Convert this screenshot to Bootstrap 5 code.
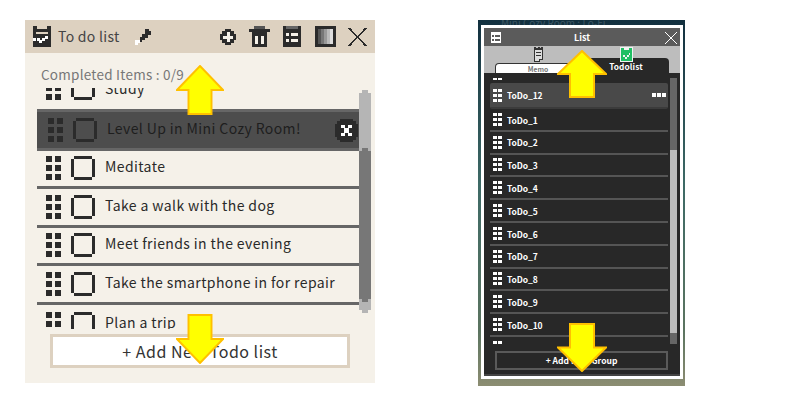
<!DOCTYPE html>
<html lang="en">
<head>
  <meta charset="UTF-8"/>
  <meta name="viewport" content="width=device-width, initial-scale=1.0"/>
  <title>To do list</title>
  <link href="https://cdn.jsdelivr.net/npm/bootstrap@5.3.2/dist/css/bootstrap.min.css" rel="stylesheet"/>
  <style>
    body { background: #fff; font-family: "Noto Sans CJK JP", "Noto Sans", sans-serif; overflow: hidden; }
    svg { display: block; flex: none; shape-rendering: crispEdges; }
    .shots { width: 800px; height: 403px; }

    /* left shot */
    .todo-panel { width: 350px; height: 363px; margin: 20px 0 0 25px; background: #f5f1e9; }
    .todo-head { height: 33px; background: #ddd1c0; padding: 0 8px; color: #444; font-size: 14px; letter-spacing: .3px; }
    .todo-head-title { margin-left: 7px; }
    .todo-count { height: 35px; padding: 11px 0 0 16px; color: #777; font-size: 13.5px; line-height: 20px; letter-spacing: .25px; }
    .todo-view { height: 241px; margin-left: 12px; overflow: hidden; }
    .todo-list { flex: none; width: 322px; margin-top: -18px; }
    .todo-list .todo-row { flex: none; height: 38.5px; padding: 0 0 0 9px; gap: 10px; background: none; border: 0; border-bottom: 3px solid #666; border-radius: 0; color: #2a2a2a; font-size: 14px; letter-spacing: .4px; white-space: nowrap; }
    .todo-list .todo-row > span { margin-top: -3px; }
    .todo-list .todo-row.above-drag { border-bottom-color: transparent; }
    .todo-list .todo-row.above-drag > span { margin-top: 1px; }
    .todo-list .todo-row.drag { height: 42px; padding-left: 11px; background: #4d4d4d; border-top: 3px solid #666; border-bottom: 3px solid #666; color: #1e1e1e; }
    .todo-bar { flex: none; width: 12px; height: 223px; margin-top: 2px; background: #b5b5b5; clip-path: polygon(3px 0, 9px 0, 9px 3px, 12px 3px, 12px 220px, 9px 220px, 9px 223px, 3px 223px, 3px 220px, 0 220px, 0 3px, 3px 3px); }
    .todo-thumb { height: 154px; margin-top: 58px; background: #777; clip-path: polygon(3px 0, 9px 0, 9px 3px, 12px 3px, 12px 151px, 9px 151px, 9px 154px, 3px 154px, 3px 151px, 0 151px, 0 3px, 3px 3px); }
    .todo-add.btn { display: block; width: 300px; height: 34px; margin: 5px 0 0 25px; padding: 0; background: #fff; border: 3px solid #ddd1c0; border-radius: 0; color: #333; font-size: 16px; line-height: 26px; letter-spacing: .5px; }
    .row-close { right: 1px; top: 7px; }

    /* right shot */
    .game-shot { width: 207px; height: 366px; margin: 20px 0 0 103px; padding: 5px 2px 7px 3px; background: linear-gradient(#12303f, #3e6a66 45%, #5b7460 85%, #8c8d72 100%); overflow: hidden; }
    .game-behind { height: 5px; margin-top: -5px; padding-left: 20px; color: #3c5664; font-size: 10px; line-height: 5px; overflow: hidden; }
    .game-frame { height: 354px; border: 3px solid #fff; background: #282828; box-shadow: inset 0 -2px #444; }
    .game-head { height: 18px; padding: 1px 3px 0 7px; background: #5b5b5b; color: #fff; font-size: 9px; font-weight: 700; }
    .game-head span { margin-right: 2px; }
    .game-tabs { height: 27px; padding: 1px 0 0 11px; background: #bdbdbd; gap: 2px; }
    .tab-col { width: 86px; }
    .tab-memo { height: 10px; margin-top: 1px; background: #fff; border: 1px solid #333; border-bottom: 0; border-radius: 4px 4px 0 0; color: #777; font-size: 6.8px; font-weight: 700; line-height: 10px; }
    .tab-todo { height: 15px; margin-top: -4px; padding-top: 1px; background: #282828; border-radius: 4px 4px 0 0; color: #fff; font-size: 8.3px; font-weight: 700; line-height: 15px; letter-spacing: .1px; }
    .tab-col svg { position: relative; z-index: 1; }
    .game-view { height: 266px; margin: 5px 0 0 6px; overflow: hidden; }
    .game-list { flex: none; width: 178px; margin-top: -15px; }
    .game-list .game-row { flex: none; height: 22.8px; padding: 0 0 0 3px; gap: 5px; background: none; border: 0; border-bottom: 2px solid #555; border-radius: 0; color: #fff; font-size: 8.5px; font-weight: 700; letter-spacing: -.1px; }
    .game-list .game-row > span { margin-top: 1px; }
    .game-list .game-row.stub { height: 20px; border: 0; padding-top: 4px; align-items: flex-start; }
    .game-list .game-row.pick { height: 26px; background: #494949; border-bottom: 2px solid #3b3b3b; border-radius: 2px; }
    .game-bar { flex: none; width: 7px; height: 266px; margin-left: 2px; background: #666; }
    .game-thumb { height: 183px; margin-top: 72px; background: #bcbcbc; }
    .game-add.btn { display: block; width: 173px; height: 19px; margin: 7px 0 0 11px; padding: 0; background: none; border: 2px solid #5a5a5a; border-radius: 0; color: #fff; font-size: 8.5px; font-weight: 700; line-height: 15px; }
    .more-dots { right: 2px; top: 10px; }

    /* arrows drawn over the shots */
    .shot-arrow { position: absolute; shape-rendering: geometricPrecision; }
    .arrow-a { left: 151px; top: 45px; width: 48px; height: 50px; }
    .arrow-b { left: 151px; top: 294px; width: 48px; height: 50px; }
    .arrow-c { left: 79px; top: 30px; width: 50px; height: 48px; }
    .arrow-d { left: 79px; top: 303px; width: 50px; height: 49px; }
  </style>
</head>
<body>
  <svg width="0" height="0" class="position-absolute">
    <symbol id="ic-grip" viewBox="0 0 15 24"><path fill="currentColor" d="M0 0h6v6H0zM9 0h6v6H9zM0 9h6v6H0zM9 9h6v6H9zM0 18h6v6H0zM9 18h6v6H9z"/></symbol>
    <symbol id="ic-box" viewBox="0 0 24 24"><path fill="currentColor" d="M3 0h18v3H3zM3 21h18v3H3zM0 3h3v18H0zM21 3h3v18h-3z"/></symbol>
    <symbol id="ic-arrow" viewBox="0 0 50 50" preserveAspectRatio="none"><polygon points="25,1 49,25 37,25 37,49 13,49 13,25 1,25" fill="#ffff00" stroke="#ffc000" stroke-width="2"/></symbol>
  </svg>

  <div class="shots d-flex align-items-start">
    <div class="todo-panel position-relative">
      <div class="todo-head d-flex align-items-center">
        <svg width="18" height="21" viewBox="0 0 18 21"><path fill="#2b2b2b" d="M0 0h18v21H0z"/><path fill="#ddd1c0" d="M4 0h10v3H4z"/><path fill="#ddd1c0" d="M3 6h12v2H3z"/><path fill="#fff" d="M0 12h3v3H0zM4 12h3v3H4zM6 14h3v3H6zM9 12h3v3H9zM12 10h3v3h-3z"/></svg>
        <span class="todo-head-title">To do list</span>
        <svg style="margin-left:14px" width="17" height="16" viewBox="0 0 17 16"><path fill="#2b2b2b" d="M11 0h4v2h2v4h-3v3h-3v2H8v2H6V8h2V5h3z"/><path fill="#fff" d="M1 11h5v3H4v2H1z"/></svg>
        <svg class="ms-auto" width="16" height="16" viewBox="0 0 16 16"><path fill="#2b2b2b" d="M5 0h6v2h3v3h2v6h-2v3h-3v2H5v-2H2v-3H0V5h2V2h3z"/><path fill="#f5f1e9" d="M7 3h3v4h3v3h-3v3H7v-3H3V7h4z"/></svg>
        <svg style="margin-left:13px" width="21" height="21" viewBox="0 0 21 21"><path fill="#555" d="M5 0h11v3H5z"/><path fill="#2b2b2b" d="M0 3h21v3H0zM3 6h15v15H3z"/><path fill="#f5f1e9" d="M6 10h3v8H6zM12 10h3v8h-3z"/></svg>
        <svg style="margin-left:13px" width="18" height="21" viewBox="0 0 18 21"><path fill="#2b2b2b" d="M0 0h18v21H0z"/><path fill="#666" d="M3 0h12v3H3z"/><path fill="#f5f1e9" d="M3 7h3v3H3zM8 7h7v3H8zM3 13h3v3H3zM8 13h7v3H8z"/></svg>
        <svg style="margin-left:14px" width="21" height="21" viewBox="0 0 21 21"><path fill="#2b2b2b" d="M0 0h21v21H0z"/><path fill="#555" d="M3 3h3v15H3z"/><path fill="#777" d="M6 3h3v15H6z"/><path fill="#999" d="M9 3h3v15H9z"/><path fill="#bbb" d="M12 3h3v15h-3z"/><path fill="#ddd" d="M15 3h3v15h-3z"/></svg>
        <svg style="margin-left:12px" width="19" height="20" viewBox="0 0 19 20"><path fill="none" stroke="#2b2b2b" stroke-width="1.6" d="M1 1l17 18M18 1L1 19"/></svg>
      </div>
      <div class="todo-count">Completed Items : 0/9</div>
      <div class="todo-view d-flex">
        <div class="todo-list list-group list-group-flush">
          <div class="todo-row above-drag list-group-item d-flex align-items-center">
            <svg width="15" height="24" color="#2b2b2b"><use href="#ic-grip"/></svg>
            <svg width="24" height="24" color="#2b2b2b"><use href="#ic-box"/></svg>
            <span>Study</span>
          </div>
          <div class="todo-row drag list-group-item d-flex align-items-center position-relative">
            <svg width="15" height="24" color="#2b2b2b"><use href="#ic-grip"/></svg>
            <svg width="24" height="24" color="#2b2b2b"><use href="#ic-box"/></svg>
            <span>Level Up in Mini Cozy Room!</span>
            <svg class="row-close position-absolute" width="23" height="23" viewBox="0 0 23 23"><path fill="#2b2b2b" d="M5 0h13v2h3v3h2v13h-2v3h-3v2H5v-2H2v-3H0V5h2V2h3z"/><path fill="#fff" d="M6 6h4v3H6zM13 6h4v3h-4zM9 9h5v5H9zM6 14h4v3H6zM13 14h4v3h-4z"/></svg>
          </div>
          <div class="todo-row list-group-item d-flex align-items-center">
            <svg width="15" height="24" color="#2b2b2b"><use href="#ic-grip"/></svg>
            <svg width="24" height="24" color="#2b2b2b"><use href="#ic-box"/></svg>
            <span>Meditate</span>
          </div>
          <div class="todo-row list-group-item d-flex align-items-center">
            <svg width="15" height="24" color="#2b2b2b"><use href="#ic-grip"/></svg>
            <svg width="24" height="24" color="#2b2b2b"><use href="#ic-box"/></svg>
            <span>Take a walk with the dog</span>
          </div>
          <div class="todo-row list-group-item d-flex align-items-center">
            <svg width="15" height="24" color="#2b2b2b"><use href="#ic-grip"/></svg>
            <svg width="24" height="24" color="#2b2b2b"><use href="#ic-box"/></svg>
            <span>Meet friends in the evening</span>
          </div>
          <div class="todo-row list-group-item d-flex align-items-center">
            <svg width="15" height="24" color="#2b2b2b"><use href="#ic-grip"/></svg>
            <svg width="24" height="24" color="#2b2b2b"><use href="#ic-box"/></svg>
            <span>Take the smartphone in for repair</span>
          </div>
          <div class="todo-row list-group-item d-flex align-items-center">
            <svg width="15" height="24" color="#2b2b2b"><use href="#ic-grip"/></svg>
            <svg width="24" height="24" color="#2b2b2b"><use href="#ic-box"/></svg>
            <span>Plan a trip</span>
          </div>
        </div>
        <div class="todo-bar"><div class="todo-thumb"></div></div>
      </div>
      <button type="button" class="todo-add btn">+ Add New Todo list</button>
      <svg class="shot-arrow arrow-a"><use href="#ic-arrow"/></svg>
      <svg class="shot-arrow arrow-b" style="transform:scaleY(-1)"><use href="#ic-arrow"/></svg>
    </div>

    <div class="game-shot position-relative">
      <div class="game-behind">Mini Cozy Room : Lo-Fi</div>
      <div class="game-frame">
        <div class="game-head d-flex align-items-center justify-content-between">
          <svg width="10" height="11" viewBox="0 0 10 11"><path fill="#fff" d="M0 0h10v11H0z"/><path fill="#5b5b5b" d="M1 3h2v2H1zM4 3h5v2H4zM1 7h2v2H1zM4 7h5v2H4z"/></svg>
          <span>List</span>
          <svg width="12" height="12" viewBox="0 0 12 12"><path fill="none" stroke="#fff" d="M0 0l12 12M12 0L0 12"/></svg>
        </div>
        <div class="game-tabs d-flex">
          <div class="tab-col d-flex flex-column align-items-center">
            <svg width="11" height="15" viewBox="0 0 11 15"><path fill="#333" d="M1 1h9v12H7v2H1z"/><path fill="#ddd" d="M2 3h7v9H6v2H2z"/><path fill="#333" d="M1 0h2v2H1zM5 0h2v2H5zM8 0h2v2H8zM3 5h5v1H3zM3 8h5v1H3z"/></svg>
            <div class="tab-memo w-100 text-center">Memo</div>
          </div>
          <div class="tab-col d-flex flex-column align-items-center">
            <svg width="13" height="15" viewBox="0 0 13 15"><path fill="#f2f2f2" d="M0 0h13v15H0z"/><path fill="#1fbf63" d="M1 1h11v13H1z"/><path fill="#f2f2f2" d="M4 1h5v2H4zM3 8h2v2H3zM5 10h2v2H5zM7 8h2v2H7zM9 6h1v2H9z"/></svg>
            <div class="tab-todo w-100 text-center">Todolist</div>
          </div>
        </div>
        <div class="game-view d-flex">
          <div class="game-list list-group list-group-flush">
            <div class="game-row stub list-group-item d-flex"><svg width="9" height="13" color="#fff"><use href="#ic-grip"/></svg></div>
            <div class="game-row pick list-group-item d-flex align-items-center position-relative">
              <svg width="9" height="13" color="#fff"><use href="#ic-grip"/></svg><span>ToDo_12</span>
              <svg class="more-dots position-absolute" width="14" height="4" viewBox="0 0 14 4"><path fill="#fff" d="M0 0h4v4H0zM5 0h4v4H5zM10 0h4v4h-4z"/></svg>
            </div>
            <div class="game-row list-group-item d-flex align-items-center"><svg width="9" height="13" color="#fff"><use href="#ic-grip"/></svg><span>ToDo_1</span></div>
            <div class="game-row list-group-item d-flex align-items-center"><svg width="9" height="13" color="#fff"><use href="#ic-grip"/></svg><span>ToDo_2</span></div>
            <div class="game-row list-group-item d-flex align-items-center"><svg width="9" height="13" color="#fff"><use href="#ic-grip"/></svg><span>ToDo_3</span></div>
            <div class="game-row list-group-item d-flex align-items-center"><svg width="9" height="13" color="#fff"><use href="#ic-grip"/></svg><span>ToDo_4</span></div>
            <div class="game-row list-group-item d-flex align-items-center"><svg width="9" height="13" color="#fff"><use href="#ic-grip"/></svg><span>ToDo_5</span></div>
            <div class="game-row list-group-item d-flex align-items-center"><svg width="9" height="13" color="#fff"><use href="#ic-grip"/></svg><span>ToDo_6</span></div>
            <div class="game-row list-group-item d-flex align-items-center"><svg width="9" height="13" color="#fff"><use href="#ic-grip"/></svg><span>ToDo_7</span></div>
            <div class="game-row list-group-item d-flex align-items-center"><svg width="9" height="13" color="#fff"><use href="#ic-grip"/></svg><span>ToDo_8</span></div>
            <div class="game-row list-group-item d-flex align-items-center"><svg width="9" height="13" color="#fff"><use href="#ic-grip"/></svg><span>ToDo_9</span></div>
            <div class="game-row list-group-item d-flex align-items-center"><svg width="9" height="13" color="#fff"><use href="#ic-grip"/></svg><span>ToDo_10</span></div>
            <div class="game-row stub list-group-item d-flex"><svg width="9" height="13" color="#fff"><use href="#ic-grip"/></svg></div>
          </div>
          <div class="game-bar"><div class="game-thumb"></div></div>
        </div>
        <button type="button" class="game-add btn">+ Add New Group</button>
      </div>
      <svg class="shot-arrow arrow-c"><use href="#ic-arrow"/></svg>
      <svg class="shot-arrow arrow-d" style="transform:scaleY(-1)"><use href="#ic-arrow"/></svg>
    </div>
  </div>

  <script src="https://cdn.jsdelivr.net/npm/bootstrap@5.3.2/dist/js/bootstrap.bundle.min.js"></script>
</body>
</html>
